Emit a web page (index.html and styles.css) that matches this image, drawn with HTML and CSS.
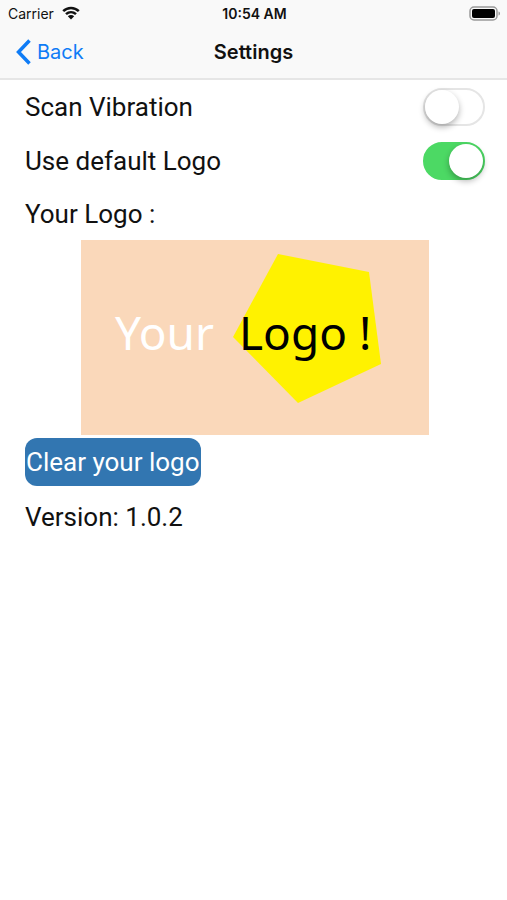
FILE: index.html
```
<!DOCTYPE html>
<html lang="en">

<head>
    <meta charset="UTF-8">
    <meta name="viewport" content="width=device-width, initial-scale=1.0">
    <title>Settings</title>
    <link rel="stylesheet" href="styles.css">
</head>

<body>
    <header class="header">
        <!-- status bar -->
        <div class="status">
            <div class="carrier">
                <span>Carrier</span>
                <svg class="wifi" viewBox="0 0 18 14" aria-hidden="true">
                    <path d="M1.2 5.2C5.6 .9 12.4 .9 16.8 5.2" />
                    <path d="M4 8.2c2.900-2.700 7.100-2.700 10 0" />
                    <path class="dot" d="M9 13.400L5.800 10.300c1.800-1.600 4.600-1.600 6.400 0z" />
                </svg>
            </div>
            <span class="clock">10:54 AM</span>
            <svg class="battery" viewBox="0 0 32 15" aria-hidden="true">
                <rect class="case" x="1" y="1" width="27" height="13" rx="4" />
                <rect x="3" y="3" width="23" height="9" rx="2" />
                <path class="tip" d="M29.500 5.500c2 .6 2 3.400 0 4z" />
            </svg>
        </div>
        <!-- navigation bar -->
        <nav class="nav">
            <a class="back" href="#">
                <svg viewBox="0 0 16 26" aria-hidden="true">
                    <path d="M13.500 1.500L2.500 13l11 11.500" />
                </svg>
                <span>Back</span>
            </a>
            <h1>Settings</h1>
        </nav>
    </header>

    <main class="settings">
        <div class="row">
            <label for="vibration">Scan Vibration</label>
            <input class="switch" type="checkbox" role="switch" id="vibration">
        </div>
        <div class="row">
            <label for="default-logo">Use default Logo</label>
            <input class="switch" type="checkbox" role="switch" id="default-logo" checked>
        </div>
        <p class="logo-title">Your Logo :</p>
        <svg class="logo" viewBox="0 0 348 195" role="img" aria-label="Your Logo !">
            <rect width="348" height="195" fill="#fad8ba" />
            <path d="M197 14L288 32L300 124L217 163L152 97z" fill="#fff200" />
            <text x="34" y="110" fill="#fff">Your</text>
            <text x="158" y="110">Logo !</text>
        </svg>
        <button class="clear" type="button">Clear your logo</button>
        <p class="row">Version: 1.0.2</p>
    </main>
</body>

</html>
```

FILE: styles.css
```
:root {
    --blue: #0f7cf6;
    --green: #4cd964;
    --bar-bg: #f9f9f9;
}

* {
    box-sizing: border-box;
    margin: 0;
    padding: 0;
}

body {
    background: #fff;
    color: #111;
    font-family: Inter, "Liberation Sans", sans-serif;
}

.header {
    background: var(--bar-bg);
    border-bottom: 2px solid #e6e6e6;
}

/* status bar */
.status {
    display: grid;
    grid-template-columns: 1fr auto 1fr;
    align-items: center;
    height: 26px;
    padding: 0 6px 0 8px;
    font-size: 14px;
}

.carrier {
    display: flex;
    align-items: center;
    gap: 8px;
}

.wifi {
    width: 18px;
    height: 14px;
    fill: none;
    stroke: #111;
    stroke-width: 2.5;
}

.wifi .dot {
    fill: #111;
    stroke: none;
}

.clock {
    font-weight: 600;
}

.battery {
    justify-self: end;
    width: 32px;
    height: 15px;
}

.battery .case {
    fill: none;
    stroke: #999;
    stroke-width: 1.5;
}

.battery .tip {
    fill: #999;
}

/* navigation bar */
.nav {
    display: grid;
    grid-template-columns: 1fr auto 1fr;
    align-items: center;
    height: 52px;
    padding: 0 16px;
}

.back {
    display: flex;
    align-items: center;
    gap: 5px;
    color: var(--blue);
    font-size: 20px;
    text-decoration: none;
}

.back svg {
    width: 16px;
    height: 26px;
    fill: none;
    stroke: var(--blue);
    stroke-width: 3.5;
}

.nav h1 {
    font-size: 20px;
    font-weight: 600;
}

/* content */
.settings {
    padding: 0 22px 0 25px;
    font-family: Roboto, "Liberation Sans", sans-serif;
    font-size: 26px;
}

.row {
    display: flex;
    align-items: center;
    justify-content: space-between;
    height: 54px;
}

.switch {
    display: flex;
    appearance: none;
    width: 62px;
    height: 38px;
    border: 2px solid #e5e5e5;
    border-radius: 19px;
    background: #fff;
}

/* knob */
.switch::before {
    content: "";
    width: 34px;
    height: 34px;
    border-radius: 50%;
    background: #fff;
    box-shadow: 0 3px 6px rgba(0, 0, 0, 0.3);
}

.switch:checked {
    justify-content: flex-end;
    border-color: var(--green);
    background: var(--green);
}

.logo-title {
    line-height: 52px;
}

.logo {
    display: block;
    width: 348px;
    max-width: 100%;
    margin: 0 auto 3px;
    font-family: "Noto Sans", sans-serif;
    font-size: 46px;
}

.clear {
    display: block;
    height: 48px;
    margin-bottom: 4px;
    padding: 0 1px;
    border: 0;
    border-radius: 12px;
    background: #3276b1;
    color: #fff;
    font: inherit;
}
```
